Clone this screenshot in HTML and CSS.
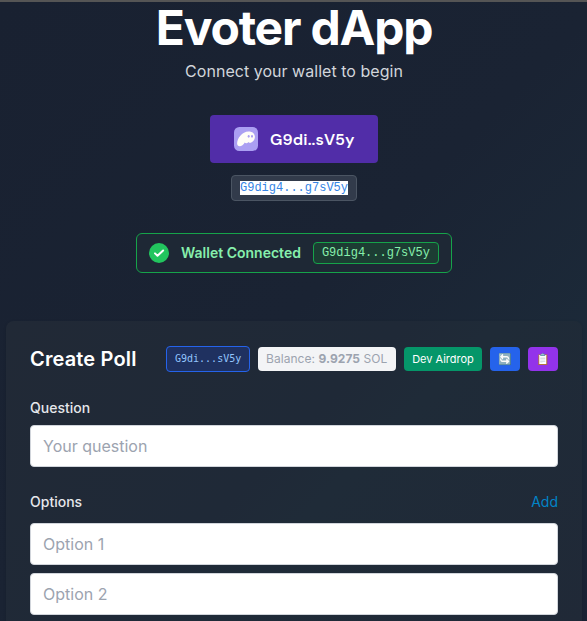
FILE: index.html
```
<!DOCTYPE html>
<html lang="en">
<head>
<meta charset="utf-8">
<title>Evoter dApp</title>
<link rel="stylesheet" href="styles.css">
</head>
<body>
<main class="page">
  <header class="hero">
    <h1>Evoter dApp</h1>
    <p class="subtitle">Connect your wallet to begin</p>
    <button class="wallet-button">
      <svg class="phantom" viewBox="0 0 24 24" aria-hidden="true">
        <rect width="24" height="24" rx="5.3" fill="#ab9ff2"/>
        <path d="M3.1 16.6C3.1 11.4 8 4.4 14.6 4.4c3.8 0 6.3 2.2 6.3 5.4 0 3.6-2.8 6-4.8 6-.8 0-1.4-.3-1.6-.9-.7.9-1.5 1.3-2.3 1.3-.7 0-1.2-.3-1.4-.8-1.3 2.2-3.2 3.8-5.2 3.8-1.5 0-2.5-1-2.5-2.6z" fill="#fffdf8"/>
        <ellipse cx="14.7" cy="9.3" rx="1" ry="1.4" fill="#ab9ff2"/>
        <ellipse cx="18" cy="9.3" rx="1" ry="1.4" fill="#ab9ff2"/>
      </svg>
      <span>G9di..sV5y</span>
    </button>
    <div class="address"><span>G9dig4...g7sV5y</span></div>
    <div class="status">
      <svg class="check" viewBox="0 0 20 20" aria-hidden="true">
        <circle cx="10" cy="10" r="10" fill="#22c55e"/>
        <path d="M6 10.4l2.5 2.4 5.6-5.3" fill="none" stroke="#fff" stroke-width="2" stroke-linecap="round" stroke-linejoin="round"/>
      </svg>
      <span class="status-label">Wallet Connected</span>
      <span class="status-address">G9dig4...g7sV5y</span>
    </div>
  </header>
  <section class="card">
    <div class="card-head">
      <h2>Create Poll</h2>
      <div class="tools">
        <span class="tag">G9di...sV5y</span>
        <span class="chip balance">Balance: <b>9.9275</b> SOL</span>
        <button class="chip airdrop">Dev Airdrop</button>
        <button class="chip refresh">🔄</button>
        <button class="chip copy">📋</button>
      </div>
    </div>
    <label class="label" for="question">Question</label>
    <input id="question" class="field" placeholder="Your question">
    <div class="options-head"><span class="label">Options</span><button class="add">Add</button></div>
    <input class="field" placeholder="Option 1" aria-label="Option 1">
    <input class="field next" placeholder="Option 2" aria-label="Option 2">
  </section>
</main>
</body>
</html>
```
FILE: styles.css
```
* { box-sizing: border-box; }
html { background: #1a2333; }
body {
  margin: 0;
  height: 621px;
  overflow: hidden;
  font-family: Inter, "Liberation Sans", sans-serif;
  color: #fff;
  background: linear-gradient(135deg, #192131 0%, #1a2333 50%, #1c2a39 78%, #1a2234 100%);
  border-top: 2px solid #555;
}
h1, h2, p { margin: 0; }
button, input { font: inherit; margin: 0; }
button { border: 0; color: inherit; }
.page { width: 576px; margin-left: 6px; }
.hero { display: flex; flex-direction: column; align-items: center; }
h1 { font-size: 48px; line-height: 52px; font-weight: 700; letter-spacing: -1.2px; }
.subtitle { margin-top: 5px; font-size: 16px; line-height: 24px; letter-spacing: .03px; color: #d1d5db; }
.wallet-button {
  display: flex;
  align-items: center;
  gap: 12px;
  width: 168px;
  height: 48px;
  margin-top: 32px;
  padding: 0 24px;
  border-radius: 4px;
  background: #512da8;
  font-family: "DM Sans", Inter, sans-serif;
  font-size: 16px;
  font-weight: 600;
  letter-spacing: .15px;
  white-space: nowrap;
}
.phantom { width: 24px; height: 24px; flex: none; }
.address {
  display: flex;
  align-items: center;
  height: 26px;
  margin-top: 12px;
  padding: 0 8px 1px;
  border: 1px solid #4b5563;
  border-radius: 4px;
  background: #323b4b;
  font: 12px/14px "Liberation Mono", monospace;
}
.address span { color: #3584e4; background: #fff; }
.status {
  display: flex;
  align-items: center;
  gap: 12px;
  height: 40px;
  margin-top: 32px;
  padding: 0 12px;
  border: 1px solid #16a34a;
  border-radius: 6px;
  background: #1e2835;
}
.check { width: 20px; height: 20px; }
.status-label { font-size: 14px; line-height: 20px; font-weight: 600; color: #86efac; }
.status-address {
  height: 22px;
  padding: 0 8px;
  border: 1px solid #16a34a;
  border-radius: 4px;
  background: #1c3d33;
  color: #86efac;
  font: 12px/20px "Liberation Mono", monospace;
}
.card {
  height: 320px;
  margin-top: 48px;
  padding: 24px;
  border-radius: 8px;
  background: linear-gradient(135deg, #212936, #1f2937 45%, #1f2b38 55%, #202937);
  box-shadow: 0 1px 3px rgba(0, 0, 0, .15);
}
.card-head { display: flex; align-items: center; justify-content: space-between; height: 28px; }
h2 { font-size: 20px; line-height: 28px; font-weight: 600; letter-spacing: .15px; }
.tools { display: flex; align-items: center; gap: 8px; }
.tag {
  width: 84px;
  height: 26px;
  padding: 0 8px;
  border: 1px solid #2563eb;
  border-radius: 4px;
  background: #1f3160;
  color: #93c5fd;
  font: 10px/24px "DejaVu Sans Mono", monospace;
}
.chip {
  height: 24px;
  padding: 0 8px;
  border-radius: 4px;
  font-size: 12px;
  line-height: 24px;
  white-space: nowrap;
}
.balance { width: 138px; background: #f3f4f6; color: #9ca3af; letter-spacing: .06px; }
.balance b { font-weight: 700; }
.airdrop { width: 78px; background: #059669; font-size: 11px; }
.refresh, .copy { width: 30px; text-align: center; padding: 0; font-size: 11px; }
.refresh { background: #2563eb; }
.copy { background: #9333ea; }
.label { display: block; font-size: 14px; line-height: 20px; font-weight: 500; color: #e5e7eb; }
.card > .label { margin-top: 25px; }
.field {
  display: block;
  width: 100%;
  height: 42px;
  margin-top: 7px;
  padding: 8px 12px;
  border: 1px solid #d1d5db;
  border-radius: 4px;
  background: #fff;
  color: #111827;
  font-size: 16px;
  line-height: 24px;
}
.field::placeholder { color: #9ca3af; opacity: 1; }
.field.next { margin-top: 8px; }
.options-head { display: flex; align-items: center; justify-content: space-between; height: 20px; margin-top: 25px; }
.options-head + .field { margin-top: 11px; }
.add { padding: 0; background: none; color: #0284c7; font-size: 14px; line-height: 20px; }
```
